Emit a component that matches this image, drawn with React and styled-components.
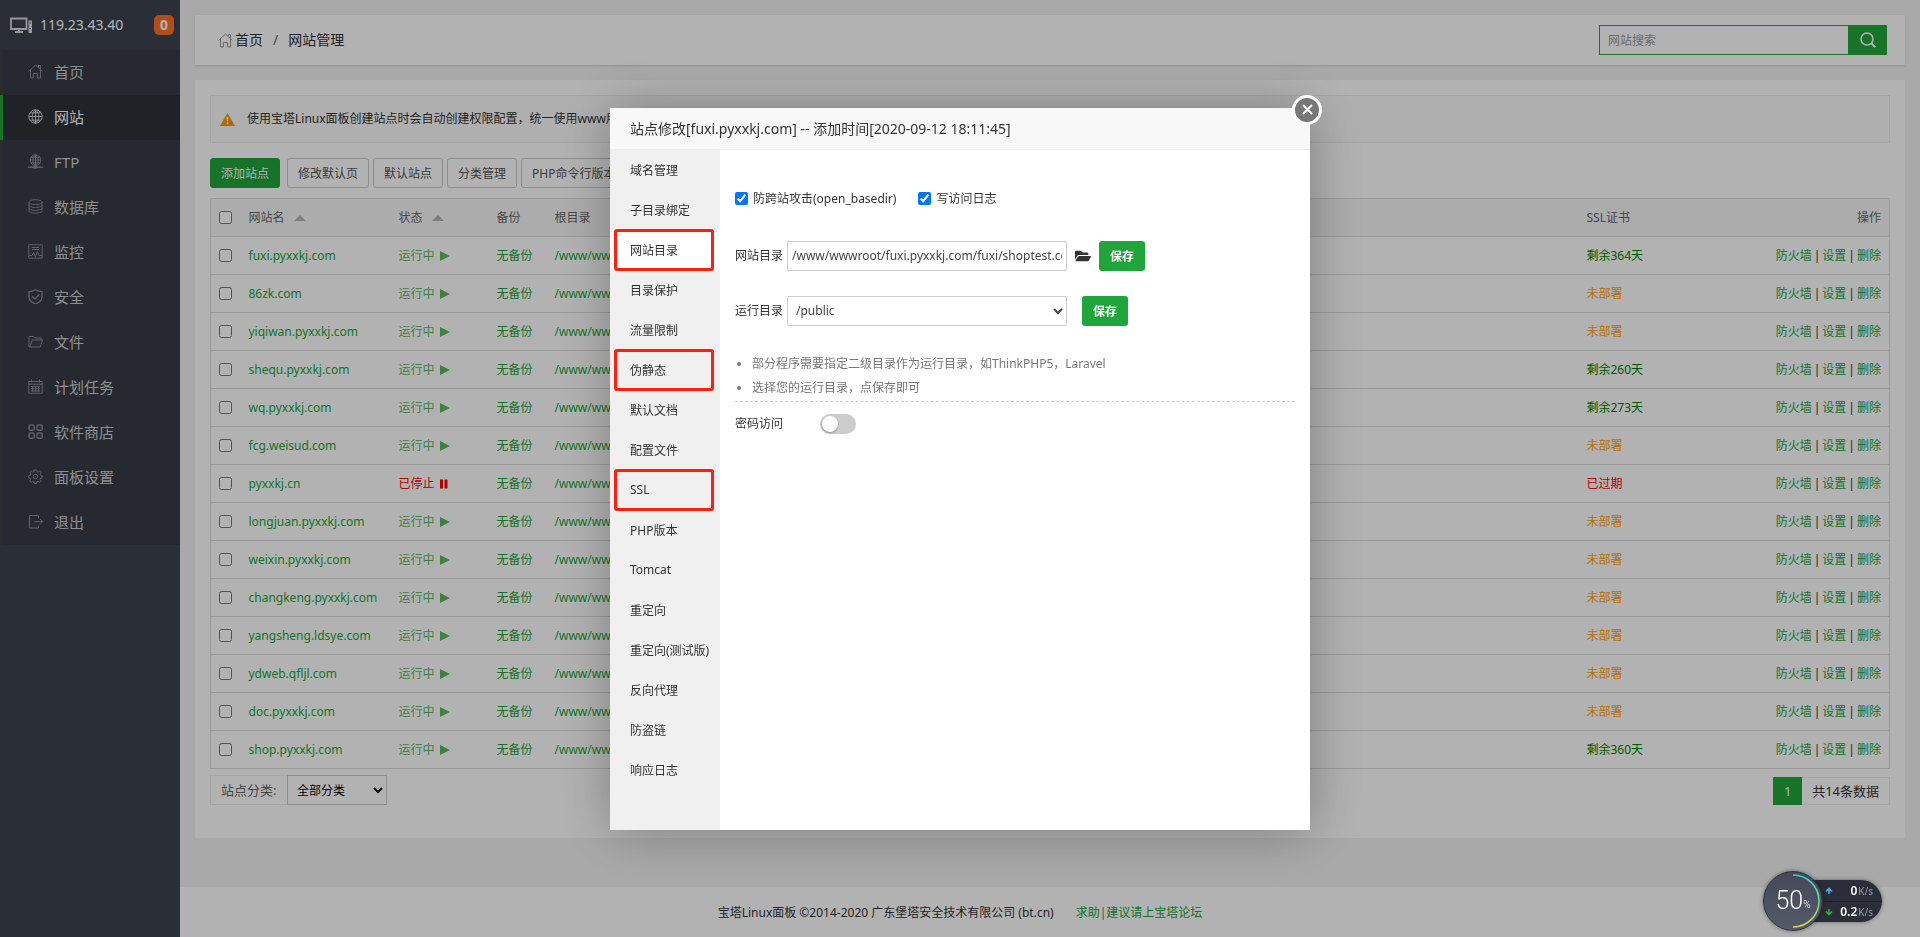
import React from "react";
import styled, { createGlobalStyle } from "styled-components";
import { FaFolderOpen } from "react-icons/fa";

const menus = [
  { name: "首页", icon: "home" },
  { name: "网站", icon: "globe", active: true },
  { name: "FTP", icon: "ftp" },
  { name: "数据库", icon: "database" },
  { name: "监控", icon: "monitor" },
  { name: "安全", icon: "shield" },
  { name: "文件", icon: "folder" },
  { name: "计划任务", icon: "calendar" },
  { name: "软件商店", icon: "apps" },
  { name: "面板设置", icon: "gear" },
  { name: "退出", icon: "exit" },
];

const sites = [
  { name: "fuxi.pyxxkj.com", ssl: "剩余364天" },
  { name: "86zk.com" },
  { name: "yiqiwan.pyxxkj.com" },
  { name: "shequ.pyxxkj.com", ssl: "剩余260天" },
  { name: "wq.pyxxkj.com", ssl: "剩余273天" },
  { name: "fcg.weisud.com" },
  { name: "pyxxkj.cn", stopped: true, ssl: "已过期" },
  { name: "longjuan.pyxxkj.com" },
  { name: "weixin.pyxxkj.com" },
  { name: "changkeng.pyxxkj.com" },
  { name: "yangsheng.ldsye.com" },
  { name: "ydweb.qfljl.com" },
  { name: "doc.pyxxkj.com" },
  { name: "shop.pyxxkj.com", ssl: "剩余360天" },
];

const tabs = [
  { name: "域名管理" },
  { name: "子目录绑定" },
  { name: "网站目录", active: true, marked: true },
  { name: "目录保护" },
  { name: "流量限制" },
  { name: "伪静态", marked: true },
  { name: "默认文档" },
  { name: "配置文件" },
  { name: "SSL", marked: true },
  { name: "PHP版本" },
  { name: "Tomcat" },
  { name: "重定向" },
  { name: "重定向(测试版)" },
  { name: "反向代理" },
  { name: "防盗链" },
  { name: "响应日志" },
];

const icons = {
  home: (
    <path d="M.5 7.5 7.5 1l7 6.5M2.5 6v8h3V9.5h4V14h3V6M10.5 3V1.500h2v3.500" />
  ),
  globe: (
    <path d="M7.500.8a6.700 6.700 0 1 0 0 13.400 6.700 6.700 0 0 0 0-13.400ZM7.500.8v13.400M.8 7.500h13.400M2 3.800h11M2 11.200h11M7.500.8c-4.500 3.500-4.500 10 0 13.400M7.500.8c4.500 3.500 4.500 10 0 13.400" />
  ),
  ftp: (
    <>
      <path d="M7.500.8a5.300 5.300 0 1 0 0 10.600 5.300 5.300 0 0 0 0-10.600ZM7.500.8v10.600M2.200 6h10.600M3 3.500h9M3 8.700h9M7.500.8c-3.500 3-3.500 8 0 10.600M7.500.8c3.500 3 3.500 8 0 10.600" />
      <path d="M0 13.200h15" strokeWidth="1.500" />
      <path d="M5.500 13.200h4" strokeWidth="3" />
    </>
  ),
  database: (
    <path d="M7.500.8c4 0 6.500 1 6.500 2.400S11.500 5.600 7.500 5.600 1 4.600 1 3.200 3.500.8 7.500.8ZM1 3.200v8.600c0 1.400 2.500 2.400 6.500 2.400s6.500-1 6.500-2.400V3.200M1 6.100c0 1.400 2.500 2.400 6.500 2.400S14 7.500 14 6.100M1 9c0 1.400 2.500 2.400 6.500 2.400S14 10.400 14 9" />
  ),
  monitor: (
    <path d="M.8.8h13.400v13.400H.8zM4 3.500h7M4 5.500h7M1 11.500h3l1.500-3 2 4 2-5 1.500 4h3" />
  ),
  shield: (
    <path
      d="M7.500.7C5.500 2 3.500 2.500 1 2.600V8c0 3.500 3 5.600 6.500 7C11 13.600 14 11.500 14 8V2.600C11.500 2.500 9.500 2 7.500.7ZM4 7.200l3 2.800 4.500-4.700"
      strokeWidth="1.300"
    />
  ),
  folder: (
    <path d="M1 13V2.500h4.500L7 4h6v2M1 13h11.200L14.500 6H4.300L1.800 13" />
  ),
  calendar: (
    <path d="M.8 2.500h13.400v11.700H.8zM.8 5.200h13.400M3.500.5v3M11.500.5v3M3 7.500h9M3 9.700h9M3 12h9M4.500 7v5.500M7.500 7v5.500M10.500 7v5.500" />
  ),
  apps: (
    <>
      <rect x="1" y="1" width="5.200" height="5.200" rx="1.500" strokeWidth="1.500" />
      <rect x="9" y="1" width="5.200" height="5.200" rx="1.500" strokeWidth="1.500" />
      <rect x="1" y="9" width="5.200" height="5.200" rx="1.500" strokeWidth="1.500" />
      <rect x="9" y="9" width="5.200" height="5.200" rx="1.500" strokeWidth="1.500" />
    </>
  ),
  gear: (
    <>
      <path d="M6.200 1h2.600l.4 1.800 1 .4L11.800 2.200l1.400 1.600-1 1.500.4 1.100 1.600.4v2.000l-1.700.4-.4 1.100 1 1.500-1.500 1.500-1.500-1-1.200.5-.4 1.700H6.300l-.4-1.700-1.100-.5-1.500 1-1.500-1.500 1-1.500-.5-1.100L.8 8.700V6.600l1.600-.4.5-1.100-1-1.500 1.500-1.400 1.500 1 1-.4z" />
      <circle cx="7.500" cy="7.500" r="2.300" />
    </>
  ),
  exit: (
    <path d="M10.500 4V1.500H1.500v12.500h9V11.500M6 7.700h8.500M12 5l2.700 2.700L12 10.400" />
  ),
};

const Icon = ({ name }) => (
  <svg
    width="15"
    height="15"
    viewBox="0 0 15 15"
    fill="none"
    stroke="currentColor"
    strokeWidth="1"
  >
    {icons[name]}
  </svg>
);

export default function App() {
  return (
    <>
      <GlobalStyle />
      <Layout>
        <Sidebar>
          <Server>
            <svg width="23" height="17" viewBox="0 0 23 17" fill="none">
              <path
                d="M1 1.500h15.500v10.500H1zM5 15h8M8.800 12v3"
                stroke="#d8dadd"
                strokeWidth="1.800"
              />
              <path d="M18.500 3.500H22V16h-3.500z" fill="#d8dadd" />
              <path d="M19.500 6h1.500M19.500 11.500h1.500" stroke="#3c444d" />
            </svg>
            <span>119.23.43.40</span>
            <Badge>0</Badge>
          </Server>
          <Nav>
            {menus.map((m) => (
              <NavItem key={m.name} href="#" $active={m.active}>
                <Icon name={m.icon} />
                {m.name}
              </NavItem>
            ))}
          </Nav>
        </Sidebar>
        <Main>
          <TopBar>
            <Crumbs>
              <Icon name="home" />
              <CrumbLink href="#">首页</CrumbLink>
              <Slash>/</Slash>
              <span>网站管理</span>
            </Crumbs>
            <Search>
              <SearchInput placeholder="网站搜索" aria-label="网站搜索" />
              <SearchBtn aria-label="搜索">
                <svg width="16" height="16" viewBox="0 0 16 16" fill="none">
                  <circle cx="7" cy="7" r="6" stroke="#fff" strokeWidth="1.600" />
                  <path d="m11.200 11.200 4 4" stroke="#fff" strokeWidth="2" />
                </svg>
              </SearchBtn>
            </Search>
          </TopBar>
          <Card>
            <Notice>
              <svg width="15" height="13" viewBox="0 0 15 13">
                <path d="M7.500 0 15 13H0z" fill="#f49b0b" />
                <path d="M6.600 4h1.800l-.3 4.500H6.900zM6.700 9.500h1.600V11H6.700z" fill="#fff" />
              </svg>
              使用宝塔Linux面板创建站点时会自动创建权限配置，统一使用www用户
            </Notice>
            <Toolbar>
              <AddBtn>添加站点</AddBtn>
              <ToolBtn>修改默认页</ToolBtn>
              <ToolBtn>默认站点</ToolBtn>
              <ToolBtn>分类管理</ToolBtn>
              <ToolBtn>PHP命令行版本</ToolBtn>
            </Toolbar>
            <SiteTable />
            <TableFoot>
              <Category>
                <CategoryLabel htmlFor="category">站点分类:</CategoryLabel>
                <CategorySelect id="category">
                  <option>全部分类</option>
                  <option>默认分类</option>
                </CategorySelect>
              </Category>
              <Pager>
                <Current>1</Current>
                <Total>共14条数据</Total>
              </Pager>
            </TableFoot>
          </Card>
          <Footer>
            <span>宝塔Linux面板 ©2014-2020 广东堡塔安全技术有限公司 (bt.cn)</span>
            <a href="#">求助|建议请上宝塔论坛</a>
          </Footer>
        </Main>
      </Layout>
      <Shade>
        <SiteDialog />
      </Shade>
      <Speed />
    </>
  );
}

const SiteTable = () => (
  <Table>
    <colgroup>
      <Col $w={30} />
      <Col $w={150} />
      <Col $w={98} />
      <Col $w={58} />
      <col />
      <Col $w={160} />
      <Col $w={151} />
    </colgroup>
    <thead>
      <tr>
        <th>
          <input type="checkbox" aria-label="全选" />
        </th>
        <th>
          网站名
          <SortUp />
        </th>
        <th>
          状态
          <SortUp />
        </th>
        <th>备份</th>
        <th>根目录</th>
        <th>SSL证书</th>
        <th>操作</th>
      </tr>
    </thead>
    <tbody>
      {sites.map((site) => (
        <tr key={site.name}>
          <td>
            <input type="checkbox" aria-label={site.name} />
          </td>
          <td>
            <a href="#">{site.name}</a>
          </td>
          <td>
            <Status href="#" $stopped={site.stopped}>
              {site.stopped ? "已停止" : "运行中"}
              <svg width="10" height="10" viewBox="0 0 10 10" fill="currentColor">
                {site.stopped ? (
                  <path d="M0 .5h3v9H0zM4.500.5h3v9h-3z" />
                ) : (
                  <path d="M0 0 10 5 0 10z" />
                )}
              </svg>
            </Status>
          </td>
          <td>
            <a href="#">无备份</a>
          </td>
          <td>
            <a href="#">/www/wwwroot</a>
          </td>
          <td>
            <Cert href="#" $color={certColor(site.ssl)}>
              {site.ssl || "未部署"}
            </Cert>
          </td>
          <td>
            <a href="#">防火墙</a>
            <Bar>|</Bar>
            <a href="#">设置</a>
            <Bar>|</Bar>
            <a href="#">删除</a>
          </td>
        </tr>
      ))}
    </tbody>
  </Table>
);

const certColor = (ssl) => {
  if (!ssl) return "orange";
  return ssl === "已过期" ? "red" : "green";
};

const SiteDialog = () => (
  <Dialog role="dialog" aria-labelledby="dialog-title">
    <DialogTitle id="dialog-title">
      站点修改[fuxi.pyxxkj.com] -- 添加时间[2020-09-12 18:11:45]
    </DialogTitle>
    <CloseBtn aria-label="关闭">
      <svg width="11" height="11" viewBox="0 0 11 11">
        <path d="m1 1 9 9M10 1l-9 9" stroke="#fff" strokeWidth="2" />
      </svg>
    </CloseBtn>
    <DialogBody>
      <Tabs>
        {tabs.map((tab) => (
          <Tab key={tab.name} $active={tab.active} $marked={tab.marked}>
            {tab.name}
          </Tab>
        ))}
      </Tabs>
      <Panel>
        <Checks>
          <Check>
            <input type="checkbox" defaultChecked />
            防跨站攻击(open_basedir)
          </Check>
          <Check>
            <input type="checkbox" defaultChecked />
            写访问日志
          </Check>
        </Checks>
        <Line>
          <FieldLabel htmlFor="site-path">网站目录</FieldLabel>
          <PathInput
            id="site-path"
            defaultValue="/www/wwwroot/fuxi.pyxxkj.com/fuxi/shoptest.com"
          />
          <FolderBtn aria-label="选择目录">
            <FaFolderOpen size={16} />
          </FolderBtn>
          <SaveBtn>保存</SaveBtn>
        </Line>
        <Line>
          <FieldLabel htmlFor="run-path">运行目录</FieldLabel>
          <RunSelect id="run-path">
            <option>/public</option>
            <option>/</option>
          </RunSelect>
          <SaveBtn $apart>保存</SaveBtn>
        </Line>
        <Tips>
          <li>部分程序需要指定二级目录作为运行目录，如ThinkPHP5，Laravel</li>
          <li>选择您的运行目录，点保存即可</li>
        </Tips>
        <Access>
          <label htmlFor="access">密码访问</label>
          <Switch id="access" type="checkbox" role="switch" />
        </Access>
      </Panel>
    </DialogBody>
  </Dialog>
);

const Speed = () => (
  <Widget>
    <Gauge>
      <Arc width="60" height="60" viewBox="0 0 60 60" fill="none">
        <defs>
          <linearGradient id="arc" x1="0" y1="0" x2="0" y2="1">
            <stop offset="0" stopColor="#35d0d8" />
            <stop offset=".6" stopColor="#86dc8c" />
            <stop offset="1" stopColor="#d8d84a" />
          </linearGradient>
        </defs>
        <path d="M30 4a26 26 0 0 1 0 52" stroke="url(#arc)" strokeWidth="1.500" />
      </Arc>
      50<Percent>%</Percent>
    </Gauge>
    <Rates>
      <Rate>
        <svg width="8" height="8" viewBox="0 0 8 8" fill="none">
          <path d="M4 7V2M1 4.500l3-3 3 3" stroke="#3fb3f5" strokeWidth="1.600" />
        </svg>
        <b>0</b>K/s
      </Rate>
      <Rate>
        <svg width="8" height="8" viewBox="0 0 8 8" fill="none">
          <path d="M4 1v5M1 3.500l3 3 3-3" stroke="#26b33b" strokeWidth="1.600" />
        </svg>
        <b>0.2</b>K/s
      </Rate>
    </Rates>
  </Widget>
);

const GlobalStyle = createGlobalStyle`
  * {
    box-sizing: border-box;
  }
  body {
    margin: 0;
    background: #f2f2f2;
    color: #333;
    font-size: 12px;
    line-height: 18px;
  }
  body, button, input, select {
    font-family: "Noto Sans", "Noto Sans CJK SC", sans-serif;
  }
  a {
    color: #20a53a;
    text-decoration: none;
  }
  svg {
    flex: none;
  }
  input[type="checkbox"] {
    margin: 0;
    width: 13px;
    height: 13px;
  }
`;

const Layout = styled.div`
  display: flex;
  min-height: 100vh;
`;

const Sidebar = styled.aside`
  flex: none;
  width: 180px;
  background: #3d444f;
`;
const Server = styled.div`
  display: flex;
  align-items: center;
  gap: 7px;
  height: 50px;
  padding: 0 6px 0 10px;
  color: #fff;
  font-size: 14px;
`;
const Badge = styled.span`
  margin-left: auto;
  width: 20px;
  line-height: 20px;
  border-radius: 5px;
  background: #ff7028;
  text-align: center;
  font-weight: bold;
`;
const Nav = styled.nav`
  display: flex;
  flex-direction: column;
`;
const NavItem = styled.a`
  display: flex;
  align-items: center;
  gap: 11px;
  height: 45px;
  padding: 0 0 2px 25px;
  border-left: 3px solid ${(p) => (p.$active ? "#20a53a" : "#3b4145")};
  background: ${(p) => (p.$active ? "#2d3138" : "#373d46")};
  color: ${(p) => (p.$active ? "#fff" : "#ccc")};
  font-size: 15px;
  svg {
    color: ${(p) => (p.$active ? "#ccc" : "#888b90")};
  }
`;

const Main = styled.div`
  flex: 1;
  display: flex;
  flex-direction: column;
  min-width: 0;
`;
const TopBar = styled.header`
  display: flex;
  align-items: center;
  justify-content: space-between;
  height: 50px;
  margin: 15px 15px 0;
  padding: 0 18px 0 23px;
  background: #fff;
  box-shadow: 0 1px 2px rgba(0, 0, 0, 0.15);
`;
const Crumbs = styled.nav`
  display: flex;
  align-items: center;
  font-size: 14px;
  svg {
    margin-right: 2px;
    color: #999;
  }
`;
const CrumbLink = styled.a`
  color: #333;
`;
const Slash = styled.span`
  margin: 0 10px;
  color: #666;
`;
const Search = styled.div`
  display: flex;
`;
const SearchInput = styled.input`
  width: 249px;
  height: 30px;
  padding: 0 8px;
  border: 1px solid #20a53a;
  border-right: 0;
  font-size: 12px;
  &::placeholder {
    color: #999;
  }
`;
const SearchBtn = styled.button`
  display: flex;
  align-items: center;
  justify-content: center;
  width: 39px;
  height: 30px;
  padding: 0;
  border: 0;
  background: #20a53a;
`;
const Card = styled.section`
  margin: 15px 15px 0;
  padding: 15px 15px 33px;
  background: #fff;
`;
const Notice = styled.div`
  display: flex;
  align-items: center;
  gap: 12px;
  height: 48px;
  padding-left: 9px;
  border: 1px solid #ececec;
  background: #fbfbfb;
`;
const Toolbar = styled.div`
  display: flex;
  gap: 4px;
  margin: 15px 0 10px;
`;
const ToolBtn = styled.button`
  height: 30px;
  padding: 0 10px;
  border: 1px solid #ccc;
  border-radius: 3px;
  background: #fff;
  color: #555;
  font-size: 12px;
`;
const AddBtn = styled(ToolBtn)`
  margin-right: 3px;
  border-color: #20a53a;
  background: #20a53a;
  color: #fff;
`;

const Table = styled.table`
  width: 100%;
  table-layout: fixed;
  border-collapse: collapse;
  border: 1px solid #ddd;
  th,
  td {
    height: 38px;
    padding: 0 8px;
    border-bottom: 1px solid #ddd;
    text-align: left;
    white-space: nowrap;
  }
  th {
    background: #f6f6f6;
    color: #666;
    font-weight: normal;
  }
  th:last-child,
  td:last-child {
    text-align: right;
  }
  input {
    display: block;
  }
`;
const Col = styled.col`
  width: ${(p) => p.$w}px;
`;
const SortUp = styled.span`
  display: inline-block;
  margin-left: 9px;
  vertical-align: middle;
  border: 6px solid transparent;
  border-top: 0;
  border-bottom-color: #b5b5b5;
`;
const Status = styled.a`
  display: inline-flex;
  align-items: center;
  gap: 5px;
  color: ${(p) => (p.$stopped ? "red" : "#5cb85c")};
`;
const Cert = styled.a`
  color: ${(p) => p.$color};
`;
const Bar = styled.span`
  margin: 0 2px;
`;
const TableFoot = styled.div`
  display: flex;
  align-items: flex-end;
  justify-content: space-between;
  margin-top: 6px;
`;
const Category = styled.div`
  display: flex;
  height: 30px;
`;
const CategoryLabel = styled.label`
  width: 77px;
  padding-left: 10px;
  border: 1px solid #ececec;
  border-right: 0;
  color: #666;
  font-size: 13px;
  line-height: 28px;
`;
const CategorySelect = styled.select`
  width: 100px;
  padding: 0 5px;
  border: 1px solid #ccc;
  border-radius: 0;
  background: #fff;
  font-size: 12px;
`;
const Pager = styled.div`
  display: flex;
  line-height: 28px;
  font-size: 13px;
`;
const Current = styled.span`
  width: 29px;
  background: #20a53a;
  color: #fff;
  text-align: center;
`;
const Total = styled.span`
  padding: 0 10px;
  border: 1px solid #ececec;
  border-left: 0;
  line-height: 26px;
`;
const Footer = styled.footer`
  display: flex;
  align-items: center;
  justify-content: center;
  gap: 22px;
  height: 50px;
  margin-top: auto;
  padding: 2px 180px 0 0;
  background: #fff;
`;

const Shade = styled.div`
  position: fixed;
  inset: 0;
  display: flex;
  align-items: center;
  justify-content: center;
  background: rgba(0, 0, 0, 0.3);
`;
const Dialog = styled.div`
  position: relative;
  width: 700px;
  background: #fff;
  box-shadow: 1px 1px 50px rgba(0, 0, 0, 0.3);
`;
const DialogTitle = styled.h2`
  margin: 0;
  height: 42px;
  padding-left: 20px;
  border-bottom: 1px solid #eee;
  background: #f8f8f8;
  font-size: 14px;
  font-weight: normal;
  line-height: 42px;
`;
const CloseBtn = styled.button`
  position: absolute;
  top: -13px;
  right: -12px;
  display: flex;
  align-items: center;
  justify-content: center;
  width: 30px;
  height: 30px;
  padding: 0;
  border: 3px solid #fff;
  border-radius: 50%;
  background: #787878;
`;
const DialogBody = styled.div`
  display: flex;
  height: 680px;
`;
const Tabs = styled.div`
  width: 110px;
  background: #f0f0f0;
`;
const Tab = styled.button`
  position: relative;
  display: block;
  width: 100%;
  height: 40px;
  padding: 0 0 0 20px;
  border: 0;
  background: ${(p) => (p.$active ? "#fff" : "transparent")};
  color: #333;
  font-size: 12px;
  text-align: left;
  white-space: nowrap;
  &::after {
    content: "";
    display: ${(p) => (p.$marked ? "block" : "none")};
    position: absolute;
    inset: -1px 6px -1px 4px;
    border: 3px solid #ff1f12;
    border-radius: 3px;
  }
`;
const Panel = styled.div`
  flex: 1;
  padding: 40px 15px 15px;
`;
const Checks = styled.div`
  display: flex;
  gap: 22px;
  margin-bottom: 33px;
`;
const Check = styled.label`
  display: flex;
  align-items: center;
  gap: 5px;
`;
const Line = styled.div`
  display: flex;
  align-items: center;
  height: 30px;
  margin-bottom: 25px;
`;
const FieldLabel = styled.label`
  width: 52px;
`;
const PathInput = styled.input`
  width: 280px;
  height: 30px;
  padding: 0 4px;
  border: 1px solid #ccc;
  border-radius: 2px;
  color: #444;
  font-size: 12px;
`;
const RunSelect = styled.select`
  width: 280px;
  height: 30px;
  padding: 0 4px;
  border: 1px solid #ccc;
  border-radius: 2px;
  background: #fff;
  color: #444;
  font-size: 12px;
`;
const FolderBtn = styled.button`
  display: flex;
  margin: 0 8px;
  padding: 0;
  border: 0;
  background: none;
  color: #333;
`;
const SaveBtn = styled.button`
  width: 46px;
  height: 30px;
  margin-left: ${(p) => (p.$apart ? 15 : 0)}px;
  padding: 0;
  border: 0;
  border-radius: 3px;
  background: #20a53a;
  color: #fff;
  font-size: 12px;
  font-weight: bold;
`;
const Tips = styled.ul`
  margin: 0;
  padding: 1px 0 1px 17px;
  border-bottom: 1px dashed #ccc;
  color: #777;
  line-height: 24px;
`;
const Access = styled.div`
  display: flex;
  align-items: center;
  gap: 37px;
  margin-top: 12px;
`;
const Switch = styled.input`
  && {
    appearance: none;
    width: 36px;
    height: 20px;
    border-radius: 10px;
    background: #ccc;
  }
  &::before {
    content: "";
    display: block;
    width: 16px;
    height: 16px;
    margin: 2px;
    border-radius: 50%;
    background: #fff;
    box-shadow: 0 1px 2px rgba(0, 0, 0, 0.3);
  }
`;

const Widget = styled.div`
  position: fixed;
  right: 38px;
  bottom: 6px;
  display: flex;
  align-items: center;
`;
const Gauge = styled.div`
  position: relative;
  z-index: 1;
  display: flex;
  align-items: center;
  justify-content: center;
  width: 60px;
  height: 60px;
  border: 1px solid #2c2f3a;
  border-radius: 50%;
  background: linear-gradient(#454957, #555a68);
  box-shadow: 0 0 4px rgba(0, 0, 0, 0.4);
  color: #fff;
  font-family: Roboto, sans-serif;
  font-size: 25px;
  font-weight: 300;
`;
const Arc = styled.svg`
  position: absolute;
  inset: -1px;
`;
const Percent = styled.span`
  padding-top: 8px;
  font-size: 10px;
`;
const Rates = styled.div`
  width: 72px;
  margin-left: -13px;
  padding-left: 15px;
  border-radius: 0 21px 21px 0;
  background: #2b2e39;
  box-shadow: 0 0 4px rgba(0, 0, 0, 0.4);
`;
const Rate = styled.div`
  display: flex;
  align-items: center;
  height: 21px;
  padding-right: 9px;
  color: #999da6;
  font-size: 10px;
  & + & {
    border-top: 1px solid #20222b;
  }
  b {
    margin: 0 1px 0 auto;
    color: #fff;
    font-size: 12px;
    font-weight: 600;
  }
`;
